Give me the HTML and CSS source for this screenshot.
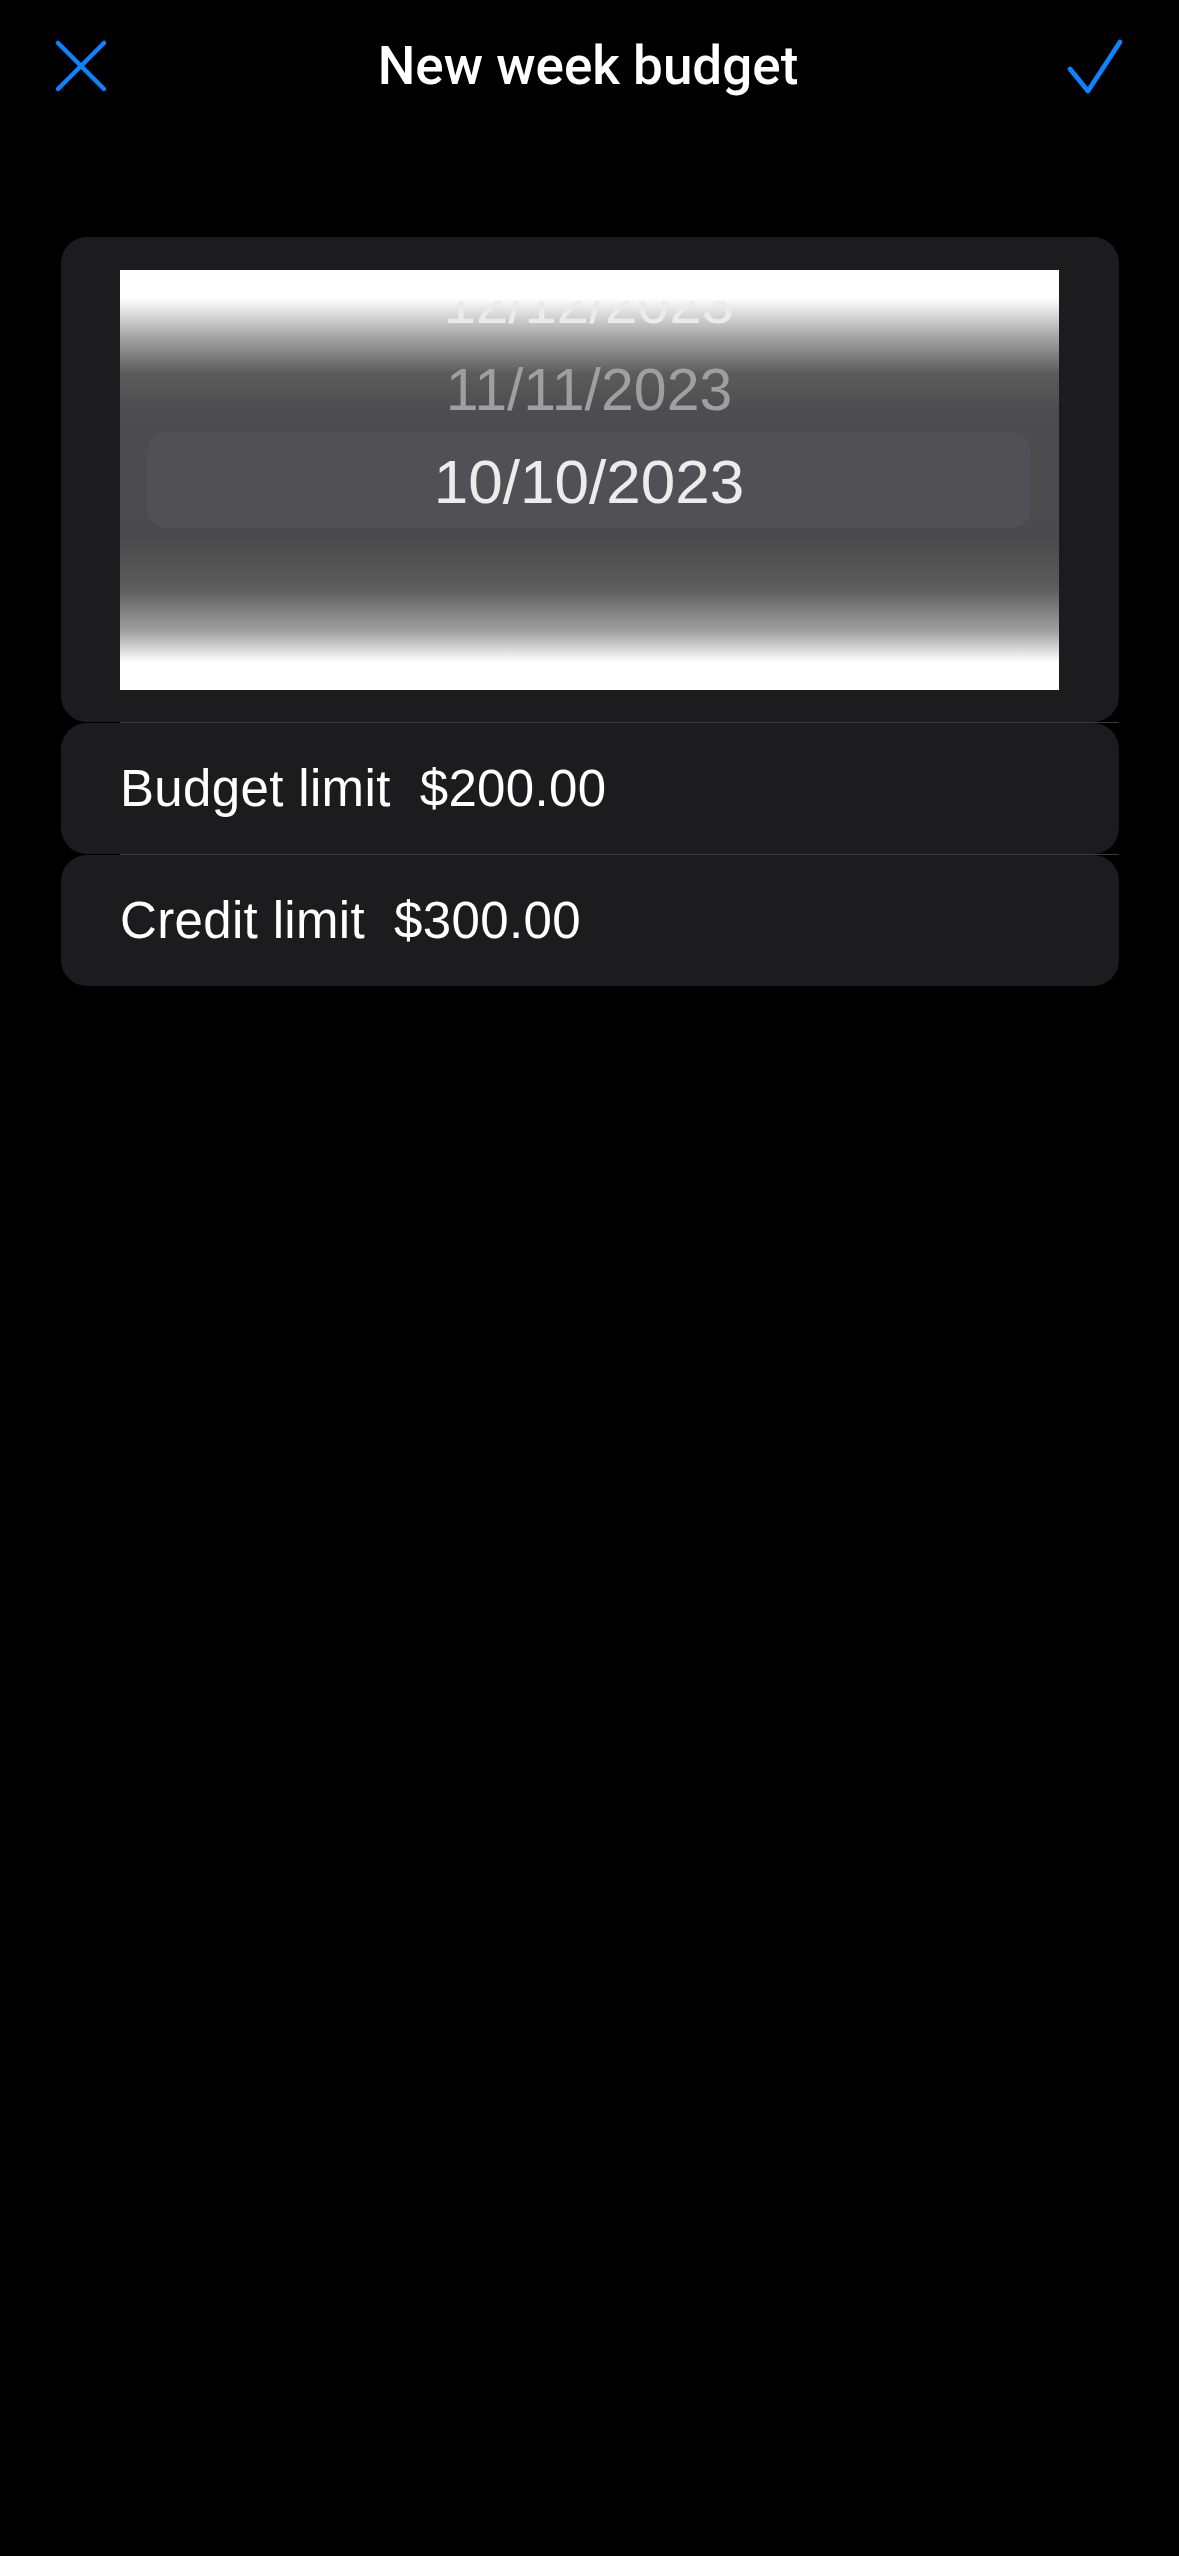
FILE: index.html
```html
<!DOCTYPE html>
<html lang="en">
<head>
<meta charset="utf-8">
<title>New week budget</title>
<link rel="stylesheet" href="styles.css">
</head>
<body>
<header class="nav">
  <button class="nav-btn" aria-label="Cancel">
    <svg width="60" height="60" viewBox="0 0 60 60"><path d="M7 7 L53 53 M53 7 L7 53" fill="none" stroke="#0a84ff" stroke-width="4.5" stroke-linecap="round"/></svg>
  </button>
  <h1 class="nav-title">New week budget</h1>
  <button class="nav-btn" aria-label="Done">
    <svg width="60" height="60" viewBox="0 0 60 60"><path d="M5 33 L23 55 L55 6" fill="none" stroke="#0a84ff" stroke-width="4.8" stroke-linecap="round" stroke-linejoin="round"/></svg>
  </button>
</header>
<main class="form">
  <section class="card picker-card">
    <div class="wheel">
      <div class="wheel-item far">12/12/2023</div>
      <div class="wheel-item near">11/11/2023</div>
      <div class="wheel-item selected">10/10/2023</div>
    </div>
  </section>
  <div class="sep"></div>
  <section class="card row"><span class="row-text">Budget limit  $200.00</span></section>
  <div class="sep"></div>
  <section class="card row"><span class="row-text">Credit limit  $300.00</span></section>
</main>
</body>
</html>
```
FILE: styles.css
```css
html, body {
  margin: 0;
  padding: 0;
  background: #000;
}
body {
  width: 1179px;
  min-height: 2556px;
  font-family: "Liberation Sans", Arial, sans-serif;
  color: #fff;
}
.nav {
  height: 132px;
  display: flex;
  align-items: center;
  justify-content: space-between;
  padding: 0 54px 0 51px;
}
.nav-btn {
  width: 60px;
  height: 60px;
  padding: 0;
  margin: 0;
  border: 0;
  background: none;
  display: block;
}
.nav-btn svg { display: block; }
.nav-title {
  margin: 0;
  font-family: Roboto, "Liberation Sans", sans-serif;
  font-weight: 500;
  font-size: 53px;
  line-height: 60px;
  color: #fff;
}
.form {
  padding: 105px 60px 0 61px;
  display: flex;
  flex-direction: column;
}
.card {
  background: #1c1c1e;
  border-radius: 26px;
}
.picker-card {
  padding: 33px 60px 32px 59px;
}
.wheel {
  height: 420px;
  box-sizing: border-box;
  padding: 0 28px 0 27px;
  display: flex;
  flex-direction: column;
  overflow: hidden;
  background: linear-gradient(to bottom,
    #ffffff 0px, #ffffff 28px, #a5a5a5 67px, #5c5c5c 103px, #4d4d4f 140px,
    #4a4a4c 267px, #565656 302px, #5d5d5d 319px, #a0a0a0 361px, #ffffff 392px, #ffffff 420px);
  font-family: "Liberation Sans", Arial, sans-serif;
  text-align: center;
}
.wheel-item { white-space: nowrap; }
.far {
  font-size: 58px;
  line-height: 66px;
  color: #ebebeb;
  clip-path: inset(31px 0 0 0);
}
.near {
  margin-top: 13px;
  font-size: 59px;
  line-height: 83px;
  color: #9f9f9f;
}
.selected {
  height: 96px;
  font-size: 62px;
  line-height: 99px;
  color: #ececec;
  background: #515155;
  border-radius: 20px;
}
.sep {
  height: 1px;
  margin-left: 59px;
  background: #3a3a3c;
}
.row {
  height: 131px;
  padding-left: 59px;
  display: flex;
  align-items: center;
}
.row-text {
  font-size: 51px;
  line-height: 131px;
  letter-spacing: 0.35px;
  white-space: pre;
  color: #fff;
}
```
